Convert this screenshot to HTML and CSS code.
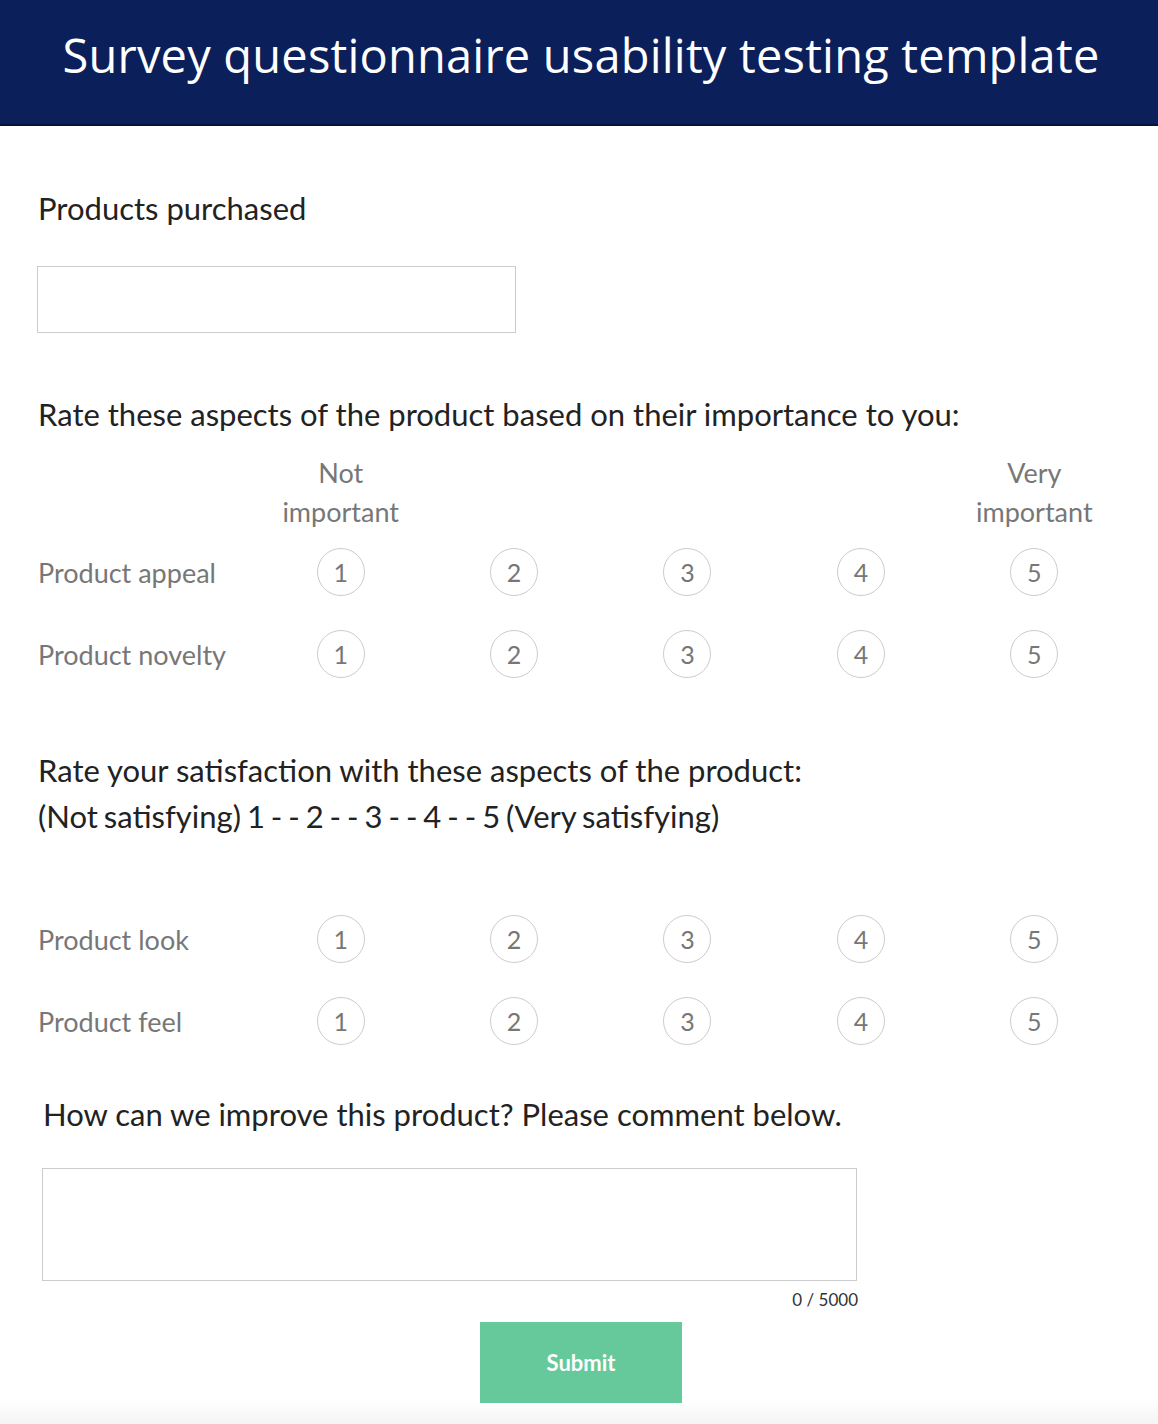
FILE: index.html
```html
<!DOCTYPE html>
<html lang="en">

<head>
    <meta charset="UTF-8">
    <meta name="viewport" content="width=device-width, initial-scale=1.0">
    <title>Survey questionnaire usability testing template</title>
    <link rel="stylesheet" href="styles.css">
</head>

<body>
    <header class="page-header">
        <h1>Survey questionnaire usability testing template</h1>
    </header>

    <form class="survey">
        <!-- 購買的產品 -->
        <section class="question">
            <label class="question-title" for="products">Products purchased</label>
            <input type="text" id="products" class="text-input">
        </section>

        <!-- 重要性評分 -->
        <section class="question">
            <p class="question-title">Rate these aspects of the product based on their importance to you:</p>
            <div class="matrix">
                <div class="matrix-head"></div>
                <div class="matrix-head">Not<br>important</div>
                <div class="matrix-head"></div>
                <div class="matrix-head"></div>
                <div class="matrix-head"></div>
                <div class="matrix-head">Very<br>important</div>

                <div class="row-label">Product appeal</div>
                <span class="circle">1</span><span class="circle">2</span><span class="circle">3</span><span class="circle">4</span><span class="circle">5</span>

                <div class="row-label">Product novelty</div>
                <span class="circle">1</span><span class="circle">2</span><span class="circle">3</span><span class="circle">4</span><span class="circle">5</span>
            </div>
        </section>

        <!-- 滿意度評分 -->
        <section class="question">
            <p class="question-title">Rate your satisfaction with these aspects of the product:<br><span class="scale">(Not satisfying) 1 - - 2 - - 3 - - 4 - - 5 (Very satisfying)</span></p>
            <div class="matrix no-head">
                <div class="row-label">Product look</div>
                <span class="circle">1</span><span class="circle">2</span><span class="circle">3</span><span class="circle">4</span><span class="circle">5</span>

                <div class="row-label">Product feel</div>
                <span class="circle">1</span><span class="circle">2</span><span class="circle">3</span><span class="circle">4</span><span class="circle">5</span>
            </div>
        </section>

        <!-- 意見欄 -->
        <section class="question comment">
            <label class="question-title" for="comment">How can we improve this product? Please comment below.</label>
            <textarea id="comment" class="text-area" maxlength="5000"></textarea>
            <div class="counter">0 / 5000</div>
        </section>

        <div class="actions">
            <button type="button" class="submit-btn">Submit</button>
        </div>
    </form>
</body>

</html>
```

FILE: styles.css
```css
/* 基本重置 */
body,
html {
    margin: 0;
    padding: 0;
    font-family: Lato, "Liberation Sans", sans-serif;
}

body {
    min-height: 1424px;
    background: linear-gradient(to bottom, #fff 1400px, #f4f4f4 1424px);
}

/* 頁首藍色標題列 */
.page-header {
    background: #0b1f5b;
    height: 124px;
    border-bottom: 2px solid #06123a;
    display: flex;
    align-items: center;
    justify-content: center;
}

.page-header h1 {
    margin: 0;
    color: #fff;
    font-family: "Open Sans", sans-serif;
    font-weight: 400;
    font-size: 47px;
    letter-spacing: 0.2px;
    padding-bottom: 14px;
    margin-left: 4px;
}

/* 表單主體 */
.survey {
    padding: 0 37px 0 38px;
}

.question {
    display: flex;
    flex-direction: column;
}

.question-title {
    margin: 0;
    font-size: 31px;
    line-height: 46px;
    color: #222;
}

/* 評分說明列的數字較擠 */
.scale {
    word-spacing: -2px;
}

.question:first-child {
    padding-top: 186px;
}

.question:first-child .question-title {
    margin-top: -127px;
}

.text-input {
    width: 479px;
    height: 67px;
    box-sizing: border-box;
    border: 1px solid #ccc;
    margin: 35px 0 0 -1px;
}

.question:nth-child(2) {
    margin-top: 58px;
}

/* 評分矩陣 */
.matrix {
    display: grid;
    grid-template-columns: 216px repeat(5, 1fr);
    grid-template-rows: 94px 82px 82px;
    align-items: center;
    justify-items: center;
    color: #777;
    font-size: 27px;
}

.matrix .matrix-head {
    align-self: start;
    text-align: center;
    line-height: 39px;
    padding-top: 16px;
}

.matrix .row-label {
    justify-self: start;
}

.circle {
    width: 46px;
    height: 46px;
    border: 1px solid #ccc;
    border-radius: 50%;
    display: flex;
    align-items: center;
    justify-content: center;
    font-size: 25px;
    color: #777;
}

.question:nth-child(3) {
    margin-top: 52px;
}

.matrix.no-head {
    grid-template-rows: 82px 82px;
    margin-top: 59px;
}

/* 意見欄 */
.comment {
    margin-top: 29px;
    padding-left: 5px;
    width: 815px;
}

.text-area {
    width: 815px;
    height: 113px;
    box-sizing: border-box;
    border: 1px solid #ccc;
    resize: none;
    margin: 31px 0 0 -1px;
}

.counter {
    text-align: right;
    font-size: 17px;
    color: #333;
    margin-top: 8px;
}

.actions {
    display: flex;
    justify-content: center;
    padding: 12px 0 0 0;
    margin-left: 3px;
}

.submit-btn {
    width: 202px;
    height: 81px;
    border: none;
    background: #66c99b;
    color: #fff;
    font-family: Lato, sans-serif;
    font-weight: 700;
    font-size: 22px;
}
```
